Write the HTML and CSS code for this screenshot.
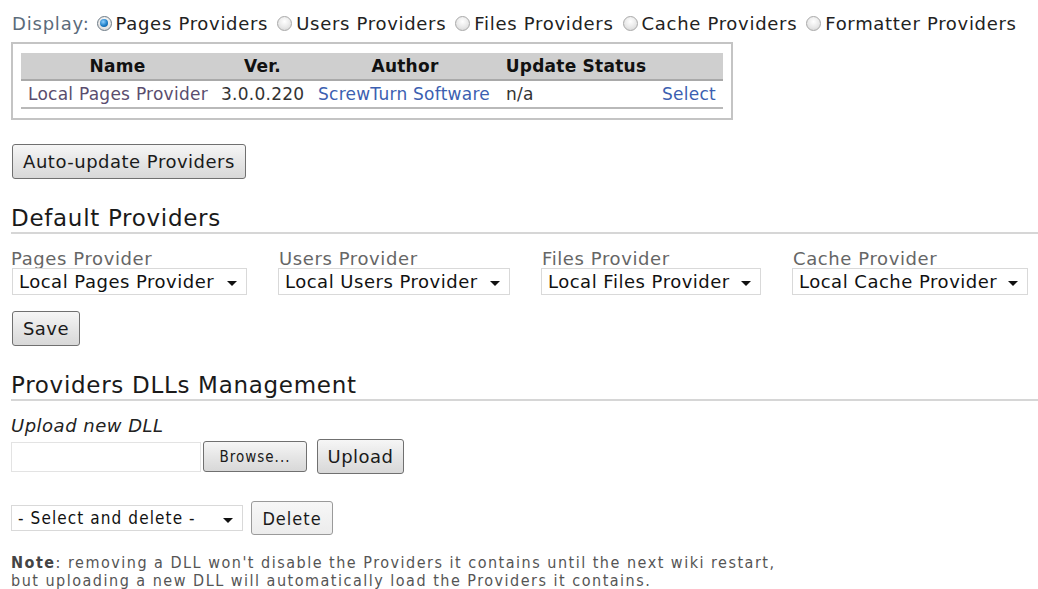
FILE: index.html
```html
<!DOCTYPE html>
<html lang="en">
<head>
<meta charset="utf-8">
<title>Providers Management</title>
<link rel="stylesheet" href="styles.css">
</head>
<body>
<div class="page">
  <div class="display-row">
    <span class="display-label">Display:</span>
    <label class="radio"><span class="dot checked"></span>Pages Providers</label>
    <label class="radio"><span class="dot"></span>Users Providers</label>
    <label class="radio"><span class="dot"></span>Files Providers</label>
    <label class="radio"><span class="dot"></span>Cache Providers</label>
    <label class="radio"><span class="dot"></span>Formatter Providers</label>
  </div>

  <div class="grid-box">
    <table class="providers">
      <thead>
        <tr>
          <th class="c-name">Name</th>
          <th class="c-ver">Ver.</th>
          <th class="c-author">Author</th>
          <th class="c-status">Update Status</th>
          <th class="c-select"></th>
        </tr>
      </thead>
      <tbody>
        <tr>
          <td class="name">Local Pages Provider</td>
          <td>3.0.0.220</td>
          <td><a class="link" href="#">ScrewTurn Software</a></td>
          <td>n/a</td>
          <td class="right"><a class="link" href="#">Select</a></td>
        </tr>
      </tbody>
    </table>
  </div>

  <button class="btn btn-auto">Auto-update Providers</button>

  <h2 class="section">Default Providers</h2>
  <div class="defaults">
    <div class="field">
      <div class="field-label">Pages Provider</div>
      <div class="select w-pages">Local Pages Provider<span class="caret"></span></div>
    </div>
    <div class="field">
      <div class="field-label">Users Provider</div>
      <div class="select w-users">Local Users Provider<span class="caret"></span></div>
    </div>
    <div class="field">
      <div class="field-label">Files Provider</div>
      <div class="select w-files">Local Files Provider<span class="caret"></span></div>
    </div>
    <div class="field">
      <div class="field-label">Cache Provider</div>
      <div class="select w-cache">Local Cache Provider<span class="caret"></span></div>
    </div>
  </div>
  <button class="btn btn-save">Save</button>

  <h2 class="section section-dll">Providers DLLs Management</h2>
  <div class="upload-title">Upload new DLL</div>
  <div class="upload-row">
    <span class="file-box"></span>
    <button class="btn btn-browse">Browse...</button>
    <button class="btn btn-upload">Upload</button>
  </div>

  <div class="delete-row">
    <div class="select select-small">- Select and delete -<span class="caret"></span></div>
    <button class="btn btn-delete">Delete</button>
  </div>

  <p class="note"><b>Note</b>: removing a DLL won't disable the Providers it contains until the next wiki restart,<br>but uploading a new DLL will automatically load the Providers it contains.</p>
</div>
</body>
</html>
```

FILE: styles.css
```css
* { box-sizing: border-box; }

html, body {
  margin: 0;
  padding: 0;
  background: #ffffff;
}

body {
  font-family: "DejaVu Sans", Verdana, sans-serif;
  font-size: 18px;
  letter-spacing: 0.5px;
  color: #222222;
  overflow: hidden;
}

.page {
  padding: 8px 0 0 10px;
}

/* radio row */
.display-row {
  display: flex;
  align-items: center;
  height: 30px;
  white-space: nowrap;
  letter-spacing: 0.7px;
}

.display-label {
  color: #5b6b7b;
  font-size: 18px;
  letter-spacing: 0.8px;
  margin: 0 7px 0 2px;
}

.radio {
  display: inline-flex;
  align-items: center;
  margin-right: 9px;
  color: #222;
}

.dot {
  width: 15px;
  height: 15px;
  border-radius: 50%;
  border: 1px solid #a9a9a9;
  background: radial-gradient(circle at 50% 35%, #ffffff 0%, #e6e6e6 60%, #cfcfcf 100%);
  margin-right: 4px;
  position: relative;
}

.dot.checked {
  border-color: #6e7b86;
}

.dot.checked::after {
  content: "";
  position: absolute;
  left: 2.5px;
  top: 2.5px;
  width: 8px;
  height: 8px;
  border-radius: 50%;
  background: radial-gradient(circle at 40% 35%, #8fd0ff 0%, #1e7fc8 55%, #0b4a86 100%);
}

/* provider table */
.grid-box {
  width: 722px;
  margin: 4px 0 0 1px;
  border: 2px solid #c4c4c4;
  padding: 9px 8px 9px 8px;
}

.providers {
  border-collapse: collapse;
  width: 702px;
  table-layout: fixed;
  font-size: 17px;
  letter-spacing: 0.25px;
}

.providers th {
  background: #cfcfcf;
  font-weight: bold;
  height: 27px;
  padding: 0;
  border-bottom: 2px solid #a9a9a9;
  text-align: center;
  color: #111;
}

.providers td {
  height: 28px;
  padding: 0 0 0 7px;
  color: #333;
  border-bottom: 2px solid #b9b9b9;
  white-space: nowrap;
}

.c-name { width: 193px; }
.c-ver { width: 97px; }
.c-author { width: 188px; }
.c-status { width: 154px; }
.c-select { width: 70px; }

.providers td.name { color: #5a4d6e; }
.providers td.right { text-align: right; padding: 0 7px 0 0; }

.link {
  color: #3c5fb1;
  text-decoration: none;
}

/* buttons */
.btn {
  font-family: "DejaVu Sans", Verdana, sans-serif;
  font-size: 18px;
  letter-spacing: 0.5px;
  color: #1a1a1a;
  border: 1px solid #707070;
  border-radius: 3px;
  background: linear-gradient(#f6f6f6, #e6e6e6 50%, #d8d8d8);
  padding: 0;
  display: block;
}

.btn-auto {
  margin: 24px 0 0 2px;
  width: 234px;
  height: 35px;
}

/* section headings */
.section {
  font-weight: normal;
  font-size: 23px;
  letter-spacing: 0.7px;
  color: #1a1a1a;
  margin: 25px 0 0 1px;
  padding: 0;
  border-bottom: 2px solid #d6d6d6;
  line-height: 28px;
}

.defaults {
  display: flex;
  margin-top: 16px;
}

.field-label {
  color: #666;
  font-size: 18px;
  letter-spacing: 0.6px;
  line-height: 18px;
  margin-left: 1px;
}

.field + .field { margin-left: 31px; }

.select {
  position: relative;
  display: flex;
  align-items: center;
  height: 27px;
  margin-top: 0;
  border: 1px solid #d9d9d9;
  background: #fff;
  padding: 0 0 0 6px;
  color: #111;
  white-space: nowrap;
}

.caret {
  position: absolute;
  right: 9px;
  top: 12px;
  width: 0;
  height: 0;
  border-left: 5px solid transparent;
  border-right: 5px solid transparent;
  border-top: 5px solid #111;
}

.w-pages { width: 235px; margin-left: 2px; }
.w-users { width: 232px; }
.w-files { width: 220px; }
.w-cache { width: 236px; }

.btn-save {
  margin: 16px 0 0 2px;
  width: 68px;
  height: 35px;
}

.section-dll { margin-top: 25px; }

.upload-title {
  font-style: italic;
  margin: 15px 0 0 1px;
  line-height: 20px;
  color: #222;
}

.upload-row {
  display: flex;
  align-items: center;
  margin-top: 3px;
}

.file-box {
  width: 190px;
  height: 30px;
  border: 1px solid #e3e3e3;
  margin-left: 1px;
}

.btn-browse {
  width: 104px;
  height: 31px;
  margin-left: 2px;
  font-family: "DejaVu Sans Condensed", "DejaVu Sans", sans-serif;
  font-size: 15px;
  letter-spacing: 1px;
}

.btn-upload {
  width: 87px;
  height: 35px;
  margin-left: 10px;
}

.delete-row {
  display: flex;
  align-items: center;
  margin-top: 27px;
}

.select-small {
  width: 232px;
  height: 26px;
  margin: 0 0 0 1px;
  font-family: "DejaVu Sans Condensed", "DejaVu Sans", sans-serif;
  font-size: 17px;
  letter-spacing: 1.1px;
}

.btn-delete {
  width: 82px;
  height: 34px;
  margin-left: 8px;
  font-family: "DejaVu Sans Condensed", "DejaVu Sans", sans-serif;
  font-size: 18px;
  letter-spacing: 1px;
  border-color: #9a9a9a;
  background: linear-gradient(#f7f7f7, #ececec);
}

.note {
  margin: 19px 0 0 1px;
  font-family: "DejaVu Sans Condensed", "DejaVu Sans", sans-serif;
  font-size: 16px;
  letter-spacing: 1.5px;
  line-height: 18px;
  color: #555;
}

.note b { color: #444; }
```
